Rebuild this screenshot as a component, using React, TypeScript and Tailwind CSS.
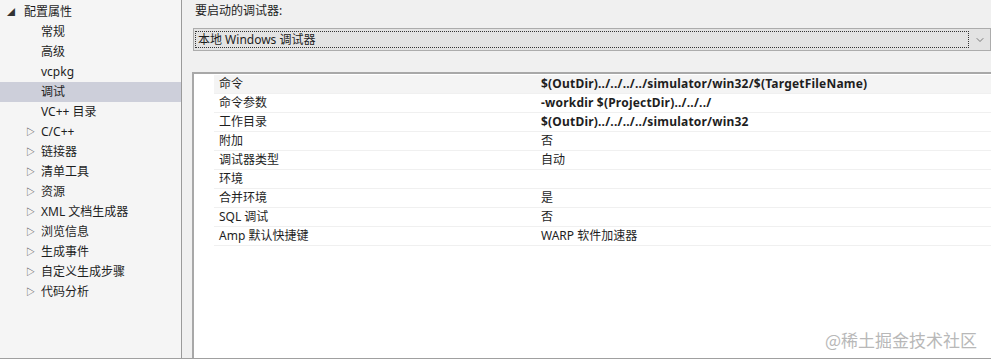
import { ChevronDown } from 'lucide-react';

const FONT = { fontFamily: '"Noto Sans", "Noto Sans CJK SC", sans-serif' };

const treeChildren = ['常规', '高级', 'vcpkg', '调试', 'VC++ 目录'];
const treeGroups = ['C/C++', '链接器', '清单工具', '资源', 'XML 文档生成器', '浏览信息', '生成事件', '自定义生成步骤', '代码分析'];

interface Prop {
  name: string;
  value: string;
  bold?: boolean;
}

const props: Prop[] = [
  { name: '命令', value: '$(OutDir)../../../../simulator/win32/$(TargetFileName)', bold: true },
  { name: '命令参数', value: '-workdir $(ProjectDir)../../../', bold: true },
  { name: '工作目录', value: '$(OutDir)../../../../simulator/win32', bold: true },
  { name: '附加', value: '否' },
  { name: '调试器类型', value: '自动' },
  { name: '环境', value: '' },
  { name: '合并环境', value: '是' },
  { name: 'SQL 调试', value: '否' },
  { name: 'Amp 默认快捷键', value: 'WARP 软件加速器' },
];

const App = () => {
  return (
    <div className="flex w-[991px] h-[359px] overflow-hidden bg-[#f0f0f0] text-[12px] leading-[16px] text-[#1e1e1e] border-b border-[#a0a0a0]" style={FONT}>
      {/* tree */}
      <div className="w-[182px] shrink-0 bg-[#f5f5f5] border-r border-[#9a9a9a] pt-[2px]">
        <div className="flex items-center h-[20px]">
          <span className="w-[22px] pl-[7px] text-[8px] text-[#333]">◢</span>
          <span className="ml-[2px]">配置属性</span>
        </div>
        {treeChildren.map(item => (
          <div
            key={item}
            className={`flex items-center h-[20px] pl-[41px] ${item === '调试' ? 'bg-[#cdcfda]' : ''}`}
          >
            {item}
          </div>
        ))}
        {treeGroups.map(item => (
          <div key={item} className="flex items-center h-[20px]">
            <span className="w-[41px] pl-[26px] text-[9px] text-[#444]">▷</span>
            <span>{item}</span>
          </div>
        ))}
      </div>

      {/* right side */}
      <div className="flex-1 flex flex-col pl-[10px]">
        <div className="h-[19px] flex items-end pl-[3px]">要启动的调试器:</div>
        <div className="mt-[9px] ml-[1px] h-[23px] bg-[#e3e3e3] border border-[#acacac] flex items-center pl-[1px] pr-[4px]">
          <div className="flex-1 h-[17px] border border-dotted border-[#333] flex items-center pl-[2px]">
            本地 Windows 调试器
          </div>
          <ChevronDown className="ml-[5px] w-[12px] h-[12px] text-[#555]" strokeWidth={1.5} />
        </div>
        <div className="mt-[21px] flex-1 bg-white border-l-[2px] border-t-[2px] border-[#a8a8a8] pt-[1px] pl-[20px]">
          {props.map((p, i) => (
            <div
              key={p.name}
              className={`flex h-[19px] items-center border-b border-[#f0f0f0] ${i === 0 ? 'bg-[#f4f4f4]' : ''}`}
            >
              <div className="w-[326px] pl-[5px] shrink-0">{p.name}</div>
              <div className={`pl-[1px] ${p.bold ? 'font-bold tracking-[0.2px]' : ''}`}>{p.value}</div>
            </div>
          ))}
          <div className="flex justify-end pr-[14px] pt-[86px] text-[17px] text-[#b8b8b8]" style={{ fontFamily: '"Noto Sans CJK SC", sans-serif' }}>
            @稀土掘金技术社区
          </div>
        </div>
      </div>
    </div>
  );
};

export default App;
